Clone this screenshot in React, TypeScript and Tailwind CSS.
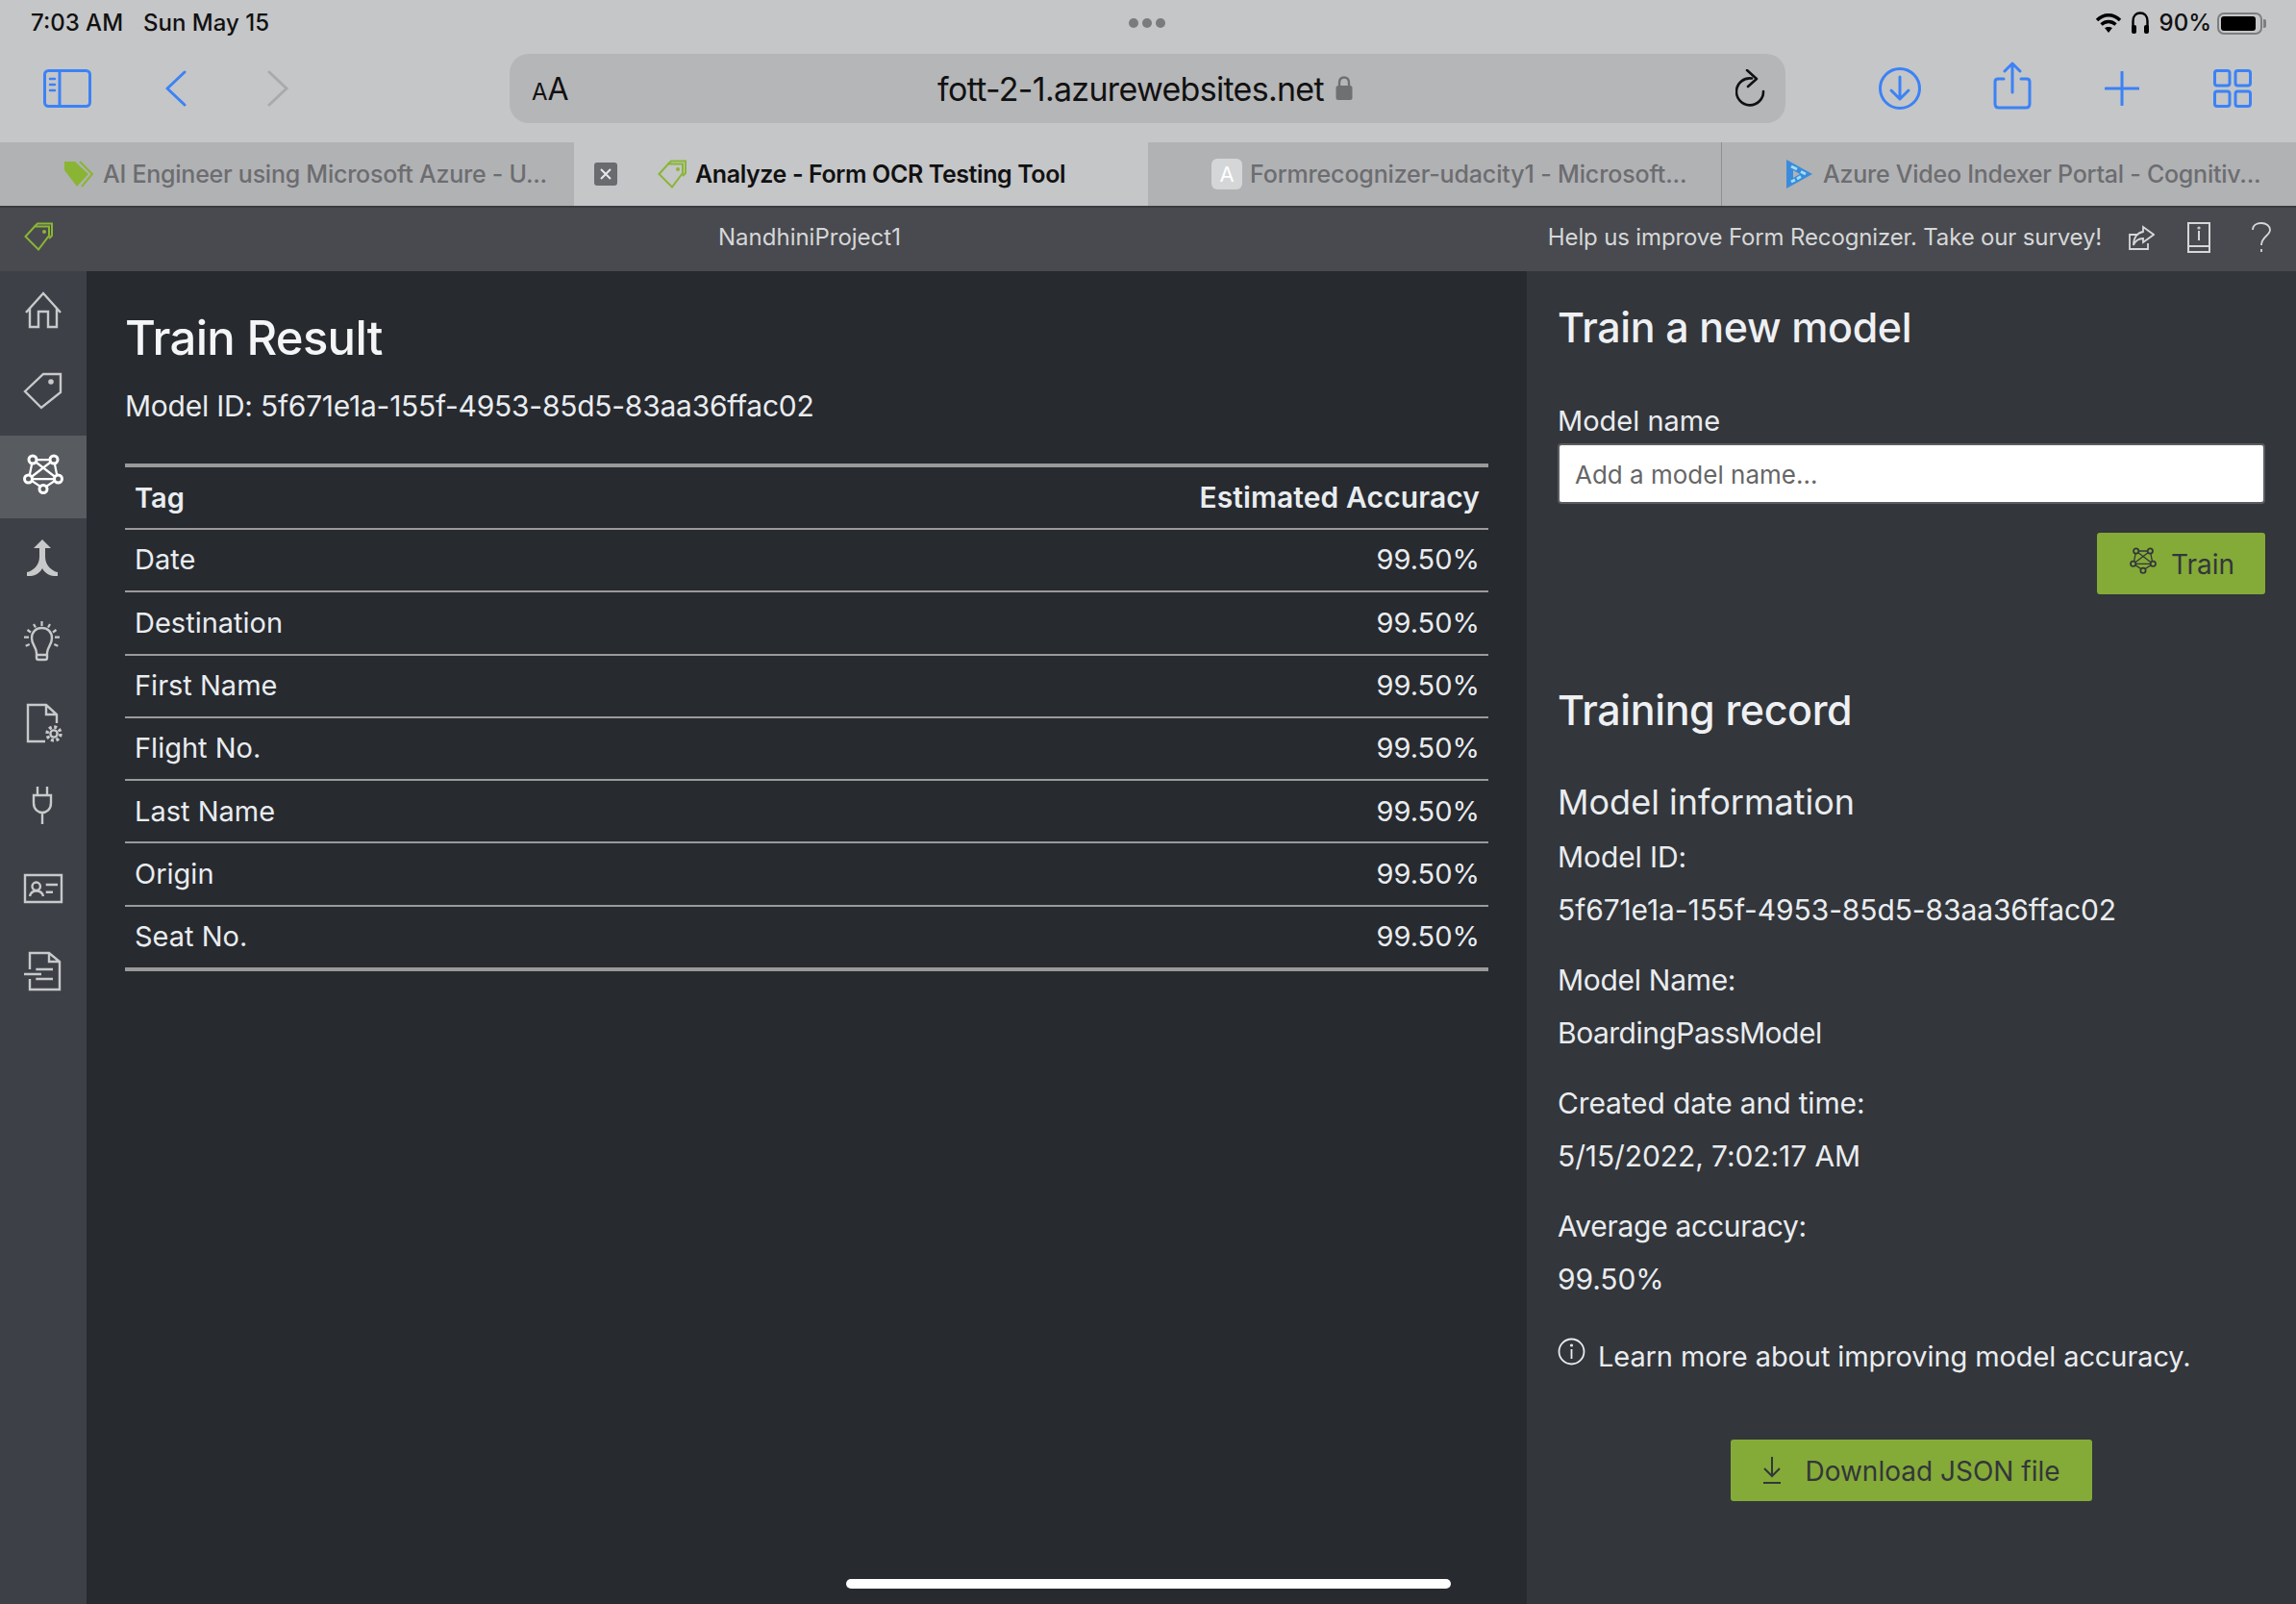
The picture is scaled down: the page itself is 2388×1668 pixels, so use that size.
import React from "react";

const rows = ["Date", "Destination", "First Name", "Flight No.", "Last Name", "Origin", "Seat No."];

function Ic({ children }: { children: React.ReactNode }) {
  return (
    <svg width="48" height="48" viewBox="0 0 48 48" fill="none" stroke="#c8c9ca" strokeWidth="2.4">
      {children}
    </svg>
  );
}

function TagLogo({ color }: { color: string }) {
  return (
    <svg width="31" height="30" viewBox="0 0 31 30" fill="none" stroke={color} strokeWidth="2">
      <path d="M1.5 15 L11 4.5 H26 V14 L15 28.5 Z" />
      <path d="M11 4.5 L14 1.5 H29 V14 L26 17" />
      <circle cx="21" cy="10" r="1" fill={color} />
    </svg>
  );
}

function NetIcon({ size, color, sw, node }: { size: number; color: string; sw: number; node: string }) {
  return (
    <svg width={size} height={size} viewBox="0 0 48 48" fill="none" stroke={color} strokeWidth={sw}>
      <path d="M13 6 H35 L39 26 L24 36 L9 26 Z M13 6 L39 26 M35 6 L9 26 M9 26 H39" strokeWidth={sw * 0.75} />
      <circle cx="13" cy="6" r="4" fill={node} />
      <circle cx="35" cy="6" r="4" fill={node} />
      <circle cx="8.5" cy="26" r="4" fill={node} />
      <circle cx="39.5" cy="26" r="4" fill={node} />
      <circle cx="24" cy="36.5" r="4" fill={node} />
    </svg>
  );
}

const navIcons: React.ReactNode[] = [
  <Ic key="home"><path d="M6 24 L24 4 L42 24 M10 20 V39 H19 V23 H29 V39 H38 V20" /></Ic>,
  <Ic key="tag"><path d="M5 21 L24 3 H42 V22 L22 38 Z" /><circle cx="32" cy="11" r="1.6" fill="#c8c9ca" /></Ic>,
  <NetIcon key="net" size={48} color="#ffffff" sw={3} node="#585c60" />,
  <svg key="merge" width="48" height="48" viewBox="0 0 48 48" fill="#c8c9ca"><path d="M23 4 L32 13 H26 V22 C26 31 33 37 39 38 V42 H35 C30 42 25 38 23 34 C21 38 16 42 11 42 H7 V38 C13 37 20 31 20 22 V13 H14 Z" /></svg>,
  <Ic key="bulb"><path d="M17 36 C17 30 12 28 12 20.5 C12 14 16.5 10 22.5 10 C28.5 10 33 14 33 20.5 C33 28 28 30 28 36 V41 Q28 43 26 43 H19 Q17 43 17 41 Z M17 38 H28" /><path d="M22.5 3 V8 M14 6 L16 9.5 M31 6 L29 9.5 M7.5 12 L11 14.5 M37.5 12 L34 14.5 M4 19.7 H9 M41 19.7 H36 M5.7 28.7 L9.7 27 M39.3 28.7 L35.3 27" strokeWidth="2.2" /></Ic>,
  <Ic key="file"><path d="M26 43 H8 V5 H27 L38 15 V24 M27 5 V15 H38" /><circle cx="35" cy="35" r="3.6" /><circle cx="35" cy="35" r="7" strokeWidth="3.4" strokeDasharray="3 2.5" /></Ic>,
  <Ic key="plug"><path d="M18 4 V13 M28 4 V13 M14 13 H32 V21 C32 28 27 31 23 31 C19 31 14 28 14 21 Z M23 31 V43" /></Ic>,
  <Ic key="card"><path d="M5 11 H43 V39 H5 Z" /><circle cx="16.7" cy="22.7" r="4.2" /><path d="M10 33 C11 28.5 13.5 27.5 16.7 27.5 C20 27.5 23 28.5 24 33 M26.7 21 H39 M26.7 28.7 H34" /></Ic>,
  <Ic key="doc"><path d="M10 23 V6 H30 L41 15 V44 H10 V33 M30 6 V15 H41" /><path d="M4 28 H22 M16.3 23 H34 M16.3 33 H34" /></Ic>,
];

function BlueIcon({ w, h, vb, children }: { w: number; h: number; vb: string; children: React.ReactNode }) {
  return (
    <svg width={w} height={h} viewBox={vb} fill="none" stroke="#3b82f6" strokeWidth="3" strokeLinecap="round" strokeLinejoin="round">
      {children}
    </svg>
  );
}

function InfoLine({ label, value, first, labelTrack, valueTrack }: { label: string; value: string; first?: boolean; labelTrack: string; valueTrack: string }) {
  return (
    <div>
      <div className={`h-[40px] leading-[40px] text-[30px] text-[#e9ecef] ${labelTrack} ${first ? "mt-[12px]" : "mt-[33px]"}`}>{label}</div>
      <div className={`h-[40px] leading-[40px] text-[30px] text-[#e9ecef] mt-[15px] ${valueTrack}`}>{value}</div>
    </div>
  );
}

function BgTab({ icon, text, tracking, border, gap }: { icon: React.ReactNode; text: string; tracking: string; border?: boolean; gap: string }) {
  return (
    <div className={`w-[597px] h-full bg-[#b1b2b4] flex items-center pl-[66px] ${gap} ${border ? "border-r border-[#8f9092]" : ""}`}>
      {icon}
      <span className={`pt-[2px] text-[25px] font-medium text-[#6c6d70] whitespace-nowrap ${tracking}`}>{text}</span>
    </div>
  );
}

export default function App() {
  return (
    <div className="relative w-[2388px] h-[1668px] overflow-hidden bg-[#272a2f] flex flex-col font-['Inter','Liberation_Sans',sans-serif]">
      {/* iPad chrome */}
      <div className="bg-[#c5c6c8] h-[148px] shrink-0">
        <div className="h-[46px] flex items-center justify-between pl-[32px] pr-[31px] pt-[2px] relative">
          <div className="flex gap-[21px] text-[24px] text-[#111] font-medium">
            <span>7:03 AM</span>
            <span>Sun May 15</span>
          </div>
          <div className="flex gap-[4px] absolute left-[1174px] top-[19px]">
            <i className="w-[10px] h-[10px] rounded-full bg-[#7a7b7d]" />
            <i className="w-[10px] h-[10px] rounded-full bg-[#7a7b7d]" />
            <i className="w-[10px] h-[10px] rounded-full bg-[#7a7b7d]" />
          </div>
          <div className="flex items-center gap-[9px] text-[24px] text-[#111] font-medium">
            <svg width="28" height="22" viewBox="0 0 28 22" fill="none" stroke="#000" strokeWidth="3.4">
              <path d="M2 8 C9 1 19 1 26 8 M6.5 12.5 C11 8.5 17 8.5 21.5 12.5" />
              <path d="M10 16 L14 21 L18 16 C16 14.5 12 14.5 10 16 Z" fill="#000" stroke="none" />
            </svg>
            <svg width="20" height="24" viewBox="0 0 20 24" fill="none" stroke="#000" strokeWidth="2.4">
              <path d="M2.5 17 V10 C2.5 4 6 1.5 10 1.5 C14 1.5 17.5 4 17.5 10 V17" />
              <rect x="1" y="14" width="5" height="9" rx="2" fill="#000" stroke="none" />
              <rect x="14" y="14" width="5" height="9" rx="2" fill="#000" stroke="none" />
            </svg>
            <span className="ml-[1px]">90%</span>
            <div className="flex items-center -ml-[3px]">
              <div className="w-[47px] h-[23px] border-2 border-[#7d7e80] rounded-[7px] p-[2px]">
                <div className="w-[36px] h-full bg-black rounded-[3px]" />
              </div>
              <div className="w-[3px] h-[9px] bg-[#7d7e80] rounded-r-[2px] ml-[1px]" />
            </div>
          </div>
        </div>
        <div className="h-[72px] mt-[10px] flex items-center relative">
          <div className="w-[530px] h-full flex items-center pl-[45px]">
            <BlueIcon w={50} h={40} vb="0 0 50 40">
              <rect x="1.5" y="1.5" width="47" height="37" rx="4" />
              <path d="M17 2 V38" />
              <path d="M7 10 H12 M7 16 H12 M7 22 H12" strokeWidth="2.5" />
            </BlueIcon>
            <div className="ml-[76px]">
              <BlueIcon w={24} h={38} vb="0 0 24 38"><path d="M21 2 L3 19 L21 36" /></BlueIcon>
            </div>
            <div className="ml-[82px]">
              <svg width="24" height="38" viewBox="0 0 24 38" fill="none" stroke="#a9aaac" strokeWidth="3" strokeLinecap="round"><path d="M3 2 L21 19 L3 36" /></svg>
            </div>
          </div>
          <div className="w-[1327px] h-full rounded-[20px] bg-[#b5b6b8] flex items-center relative">
            <span className="absolute left-[23px] top-[16px] text-[#111] leading-none flex items-baseline pt-[5px]">
              <span className="text-[24px]">A</span><span className="text-[32px]">A</span>
            </span>
            <div className="w-full flex justify-center items-center gap-[12px] pr-[5px]">
              <span className="text-[34px] text-[#111] tracking-[-0.7px]">fott-2-1.azurewebsites.net</span>
              <svg width="18" height="26" viewBox="0 0 18 26" fill="none"><path d="M4 12 V7 C4 3.5 6 1.5 9 1.5 C12 1.5 14 3.5 14 7 V12" stroke="#6f7072" strokeWidth="2.4" /><rect x="0.5" y="10" width="17" height="15" rx="2.5" fill="#6f7072" /></svg>
            </div>
            <div className="absolute right-[20px] top-[16px]">
              <svg width="32" height="40" viewBox="0 0 32 40" fill="none" stroke="#111" strokeWidth="2.6" strokeLinecap="round" strokeLinejoin="round">
                <path d="M17 9.5 A14 14 0 1 0 29 23" />
                <path d="M12 1 L22 10 L13 18" />
              </svg>
            </div>
          </div>
          <div className="flex-1 flex items-center pl-[96px]">
            <BlueIcon w={46} h={46} vb="0 0 46 46">
              <ellipse cx="23" cy="23" rx="20.5" ry="20.5" />
              <path d="M23 11 V33 M14 25 L23 34 L32 25" />
            </BlueIcon>
            <div className="ml-[74px] -mt-[6px]">
              <BlueIcon w={40} h={50} vb="0 0 40 50">
                <path d="M11 18 H5 Q2 18 2 21 V44 Q2 48 6 48 H34 Q38 48 38 44 V21 Q38 18 35 18 H29" />
                <path d="M20 32 V3 M12 10 L20 2 L28 10" />
              </BlueIcon>
            </div>
            <div className="ml-[76px]">
              <BlueIcon w={36} h={36} vb="0 0 36 36"><path d="M18 1 V35 M1 18 H35" /></BlueIcon>
            </div>
            <div className="ml-[77px]">
              <BlueIcon w={40} h={40} vb="0 0 40 40">
                <rect x="1.5" y="1.5" width="15.5" height="15.5" rx="2.5" />
                <rect x="23" y="1.5" width="15.5" height="15.5" rx="2.5" />
                <rect x="1.5" y="23" width="15.5" height="15.5" rx="2.5" />
                <rect x="23" y="23" width="15.5" height="15.5" rx="2.5" />
              </BlueIcon>
            </div>
          </div>
        </div>
      </div>

      {/* Tabs */}
      <div className="h-[66px] shrink-0 flex">
        <BgTab
          gap="gap-[9px]"
          tracking="tracking-[-0.25px]"
          text="AI Engineer using Microsoft Azure - U..."
          icon={
            <svg width="32" height="28" viewBox="0 0 32 28">
              <path d="M1 1 H12 L26 14 L14 27 L1 10 Z" fill="#8ab534" />
              <path d="M17 1 L30 14 L19 27" fill="none" stroke="#8ab534" strokeWidth="2" />
            </svg>
          }
        />
        <div className="w-[597px] h-full bg-[#c5c6c8] flex items-center relative pl-[21px]">
          <div className="w-[24px] h-[24px] rounded-[3px] bg-[#6a6b6e] flex items-center justify-center">
            <svg width="12" height="12" viewBox="0 0 12 12" stroke="#e8e8e8" strokeWidth="2"><path d="M1 1 L11 11 M11 1 L1 11" /></svg>
          </div>
          <div className="ml-[42px] flex"><TagLogo color="#8ab534" /></div>
          <span className="pt-[2px] ml-[8px] text-[25px] font-semibold text-[#111] whitespace-nowrap tracking-[-0.4px]">Analyze - Form OCR Testing Tool</span>
        </div>
        <BgTab
          gap="gap-[8px]"
          border
          tracking="tracking-[-0.15px]"
          text="Formrecognizer-udacity1 - Microsoft..."
          icon={
            <div className="w-[32px] h-[32px] rounded-[6px] bg-[#d5d6d8] flex items-center justify-center text-white text-[22px]">A</div>
          }
        />
        <BgTab
          gap="gap-[10px]"
          tracking="tracking-[-0.25px]"
          text="Azure Video Indexer Portal - Cognitiv..."
          icon={
            <svg width="29" height="32" viewBox="0 0 29 32" fill="none">
              <path d="M1 1 L28 16 L1 31 Z" fill="#3b8bdc" />
              <path d="M8 12 L15 16 L8 20 Z" fill="#b1b2b4" />
              <path d="M6 8 L12 11 M16 13.5 L21 16 M16 18.5 L12 21 M6 24 L10 22" stroke="#9fe0f5" strokeWidth="3" />
            </svg>
          }
        />
      </div>

      {/* App header */}
      <div className="h-[68px] shrink-0 bg-[#484a4f] border-t-2 border-[#3a3b3f] flex items-center relative pl-[25px] pr-[25px]">
        <div className="flex -mt-[6px]"><TagLogo color="#8ab534" /></div>
        <span className="absolute left-[747px] top-[14px] text-[24px] text-[#d6d7d8] leading-[34px]">NandhiniProject1</span>
        <div className="ml-auto flex items-center -mt-[4px]">
          <span className="text-[24px] text-[#d6d7d8] tracking-[-0.15px]">Help us improve Form Recognizer. Take our survey!</span>
          <div className="ml-[27px] flex">
            <svg width="28" height="28" viewBox="0 0 28 28" fill="none" stroke="#d6d7d8" strokeWidth="1.8">
              <path d="M10 11 H2 V26 H21 V20" />
              <path d="M16 3 L27 11 L16 19 V15 C11 15 8 17 6 22 C6 14 10 9 16 8 Z" />
            </svg>
          </div>
          <div className="ml-[33px] flex">
            <svg width="26" height="32" viewBox="0 0 26 32" fill="none" stroke="#d6d7d8" strokeWidth="2">
              <path d="M2 1 H24 V31 H2 Z M2 25 H24" />
              <path d="M13 9 V19" />
              <circle cx="13" cy="6" r="0.6" />
            </svg>
          </div>
          <div className="ml-[41px] flex">
            <svg width="22" height="32" viewBox="0 0 22 32" fill="none" stroke="#d6d7d8" strokeWidth="1.8">
              <path d="M2 8 C2 3 6 1 11 1 C16 1 20 4 20 8 C20 14 11 15 11 24" />
              <path d="M11 28 V31" />
            </svg>
          </div>
        </div>
      </div>

      {/* Body */}
      <div className="flex-1 flex min-h-0">
        <nav className="w-[90px] shrink-0 bg-[#3d4147] flex flex-col">
          {navIcons.map((icon, i) => (
            <div key={i} className={`h-[85.5px] flex items-center justify-center ${i === 2 ? "bg-[#585c60]" : ""}`}>
              {icon}
            </div>
          ))}
        </nav>

        <main className="w-[1498px] shrink-0 bg-[#272a2f] px-[40px] pt-[40px] text-[#e9ecef]">
          <h1 className="h-[60px] leading-[60px] text-[49px] font-medium text-[#f4f5f6] tracking-[-0.7px]">Train Result</h1>
          <div className="h-[40px] leading-[40px] mt-[20px] text-[30px] tracking-[-0.25px]">Model ID: 5f671e1a-155f-4953-85d5-83aa36ffac02</div>
          <div className="mt-[40px] border-t-4 border-b-4 border-[#9a9a9a]">
            <div className="h-[63px] pl-[10px] pr-[9px] flex items-center justify-between text-[29px] font-semibold">
              <span>Tag</span>
              <span className="text-[30px] tracking-[0.1px]">Estimated Accuracy</span>
            </div>
            {rows.map((r) => (
              <div key={r} className="h-[65.3px] pl-[10px] pr-[9px] pb-[1px] flex items-center justify-between text-[29px] border-t-2 border-[#9a9a9a]">
                <span>{r}</span>
                <span>99.50%</span>
              </div>
            ))}
          </div>
        </main>

        <aside className="flex-1 bg-[#33363b] px-[32px] pt-[28px] text-[#e9ecef]">
          <h2 className="h-[60px] leading-[60px] text-[43px] font-medium text-[#eef0f3] tracking-[-0.4px]">Train a new model</h2>
          <div className="h-[40px] leading-[40px] mt-[48px] text-[29px]">Model name</div>
          <div className="h-[63px] mt-[3px] bg-white border-2 border-[#5a5c60] rounded-[4px] flex items-center px-[16px] pt-[2px] text-[26px] text-[#666]">Add a model name...</div>
          <div className="flex justify-end mt-[30px]">
            <div className="w-[175px] h-[64px] bg-[#84ab37] rounded-[3px] flex items-center justify-center gap-[13px] text-[28px] text-[#33363b]">
              <div className="flex -mt-[2px]"><NetIcon size={32} color="#33363b" sw={2.6} node="#84ab37" /></div>
              <span className="pt-[2px]">Train</span>
            </div>
          </div>
          <h2 className="h-[60px] leading-[60px] mt-[90px] text-[43px] font-medium text-[#eef0f3] tracking-[-0.4px]">Training record</h2>
          <h3 className="h-[50px] leading-[50px] mt-[41px] text-[36px] text-[#e9ecef]">Model information</h3>
          <InfoLine first labelTrack="tracking-[-0.1px]" valueTrack="tracking-[-0.1px]" label="Model ID:" value="5f671e1a-155f-4953-85d5-83aa36ffac02" />
          <InfoLine labelTrack="tracking-[-0.3px]" valueTrack="tracking-[-0.5px]" label="Model Name:" value="BoardingPassModel" />
          <InfoLine labelTrack="tracking-[-0.15px]" valueTrack="tracking-[-0.1px]" label="Created date and time:" value="5/15/2022, 7:02:17 AM" />
          <InfoLine labelTrack="tracking-[-0.3px]" valueTrack="tracking-[-0.1px]" label="Average accuracy:" value="99.50%" />
          <div className="h-[40px] mt-[41px] flex items-center gap-[13px] text-[29px] tracking-[-0.1px]">
            <svg className="-mt-[12px]" width="29" height="29" viewBox="0 0 29 29" fill="none" stroke="#e9ecef" strokeWidth="1.8">
              <circle cx="14.5" cy="14.5" r="13" />
              <path d="M14.5 12 V22" />
              <circle cx="14.5" cy="8" r="0.7" />
            </svg>
            <span>Learn more about improving model accuracy.</span>
          </div>
          <div className="mt-[66px] flex justify-center">
            <div className="w-[376px] h-[64px] bg-[#84ab37] rounded-[3px] flex items-center justify-center gap-[24px] text-[28px] text-[#33363b]">
              <svg width="20" height="28" viewBox="0 0 20 28" fill="none" stroke="#33363b" strokeWidth="2">
                <path d="M10 0 V20 M2 12 L10 20 L18 12 M1 27 H19" />
              </svg>
              <span className="pt-[2px]">Download JSON file</span>
            </div>
          </div>
        </aside>
      </div>

      {/* iPad home indicator */}
      <div className="absolute left-[880px] top-[1642px] w-[629px] h-[10px] rounded-full bg-white" />
    </div>
  );
}
